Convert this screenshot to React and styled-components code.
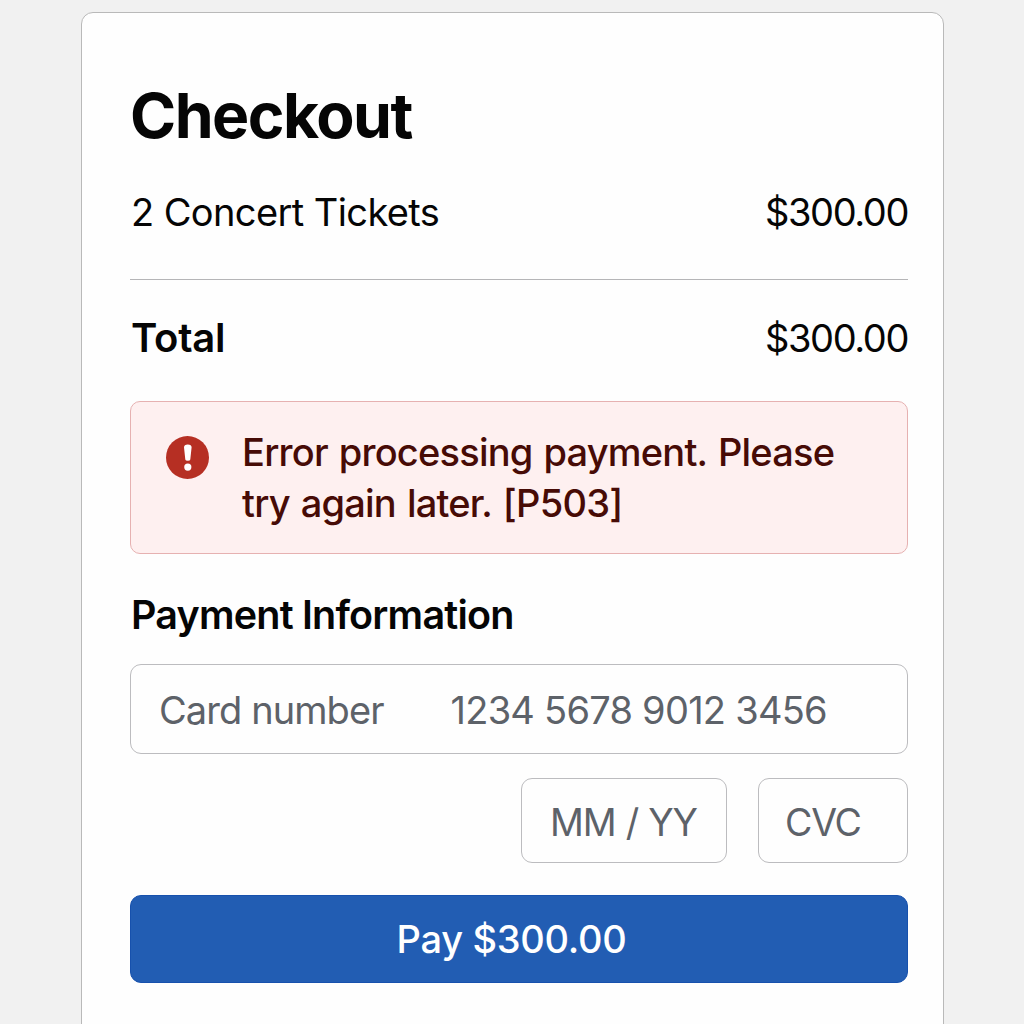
import React from "react";
import styled, { createGlobalStyle } from "styled-components";

const Global = createGlobalStyle`
  * { box-sizing: border-box; }
  html, body { margin: 0; height: 1024px; overflow: hidden; background: #f1f1f1; }
  body { font-family: Inter, "Liberation Sans", sans-serif; color: #050505; }
`;
const Page = styled.div`
  height: 1024px; overflow: hidden; padding: 12px 80px 0 81px; background: #f1f1f1;
`;
const Card = styled.main`
  height: 1030px; padding: 63px 35px 0 48px; border: 1px solid #b9b9b9; border-radius: 12px; background: #fefefe;
`;
const Text = styled.span`
  display: block; white-space: nowrap;
  font-size: ${p => p.$size || 38}px; font-weight: ${p => p.$weight || 400};
  letter-spacing: ${p => p.$track || 0}px; word-spacing: ${p => p.$words || 0}px; line-height: 46px;
`;
const Title = styled.h1`
  margin: 0; height: 77px; font-size: 62.5px; line-height: 78px; font-weight: 660; letter-spacing: -1.55px;
`;
const Row = styled.div`
  display: flex; justify-content: space-between; align-items: center; height: 46px;
  margin-top: ${p => p.$top}px; padding-left: 1px;
`;
const Divider = styled.hr`
  height: 1px; border: 0; margin: 44px 0 0; background: #b5b5b7;
`;
const Alert = styled.div`
  display: flex; height: 153px; margin-top: 40px; padding: 27px 34px 0 35px; gap: 33px;
  border: 1px solid #e6b1b1; border-radius: 10px; background: #fef0f0; color: #470b06;
`;
const AlertIcon = styled.svg`
  width: 43px; height: 43px; margin-top: 7px; flex: none;
`;
const Message = styled.div`
  display: flex; flex-direction: column; gap: 5px;
`;
const Heading = styled.h2`
  margin: 38px 0 26px; height: 46px; padding-left: 1px;
`;
const Field = styled.div`
  display: flex; align-items: center; width: ${p => p.$width}; height: ${p => p.$height}px;
  padding: ${p => p.$drop || 0}px 0 0 ${p => p.$pad}px; gap: 67px;
  border: 1px solid #bcbcbf; border-radius: 11px; color: #5d6269;
`;
const SmallFields = styled.div`
  display: flex; justify-content: flex-end; gap: 31px; margin-top: 24px;
`;
const Button = styled.button`
  display: flex; align-items: center; justify-content: center; width: 100%; height: 88px; margin-top: 32px;
  padding: 0 15px 0 0; border: 1px solid #1751ad; border-radius: 11px; background: #225db3; color: #fff; font-family: inherit;
`;

export default function App() {
  return (
    <Page>
      <Global />
      <Card>
        <Title>Checkout</Title>
        <Row $top={36}>
          <Text $track={-0.6}>2 Concert Tickets</Text>
          <Text $track={-1.4}>$300.00</Text>
        </Row>
        <Divider />
        <Row $top={35}>
          <Text $weight={600} $size={40} $track={-0.2}>Total</Text>
          <Text $track={-1.4}>$300.00</Text>
        </Row>
        <Alert role="alert">
          <AlertIcon viewBox="0 0 43 43" aria-hidden="true">
            <circle cx="21.5" cy="21.5" r="21.5" fill="#b62f23" />
            <path d="M18 11.3Q18 8.4 21.8 8.4Q25.6 8.4 25.6 11.3L24.3 23.6Q24.2 24.8 21.8 24.8Q19.4 24.8 19.3 23.6Z" fill="#fff" />
            <circle cx="21.8" cy="31.1" r="3.6" fill="#fff" />
          </AlertIcon>
          <Message>
            <Text $weight={500} $track={-0.78} $words={1.6}>Error processing payment. Please</Text>
            <Text $weight={500} $track={-0.78} $words={1.6}>try again later. [P503]</Text>
          </Message>
        </Alert>
        <Heading><Text $weight={600} $size={39.5} $track={-0.8}>Payment Information</Text></Heading>
        <Field $width="100%" $height={90} $pad={28} $drop={1}>
          <Text $track={-0.92}>Card number</Text>
          <Text $track={-0.76}>1234 5678 9012 3456</Text>
        </Field>
        <SmallFields>
          <Field $width="206px" $height={85} $pad={28} $drop={4}><Text $size={37.5} $track={-1.15} $words={0.8}>MM / YY</Text></Field>
          <Field $width="150px" $height={85} $pad={26} $drop={4}><Text $size={37.5} $track={-1.2}>CVC</Text></Field>
        </SmallFields>
        <Button><Text $weight={550} $track={-0.3}>Pay $300.00</Text></Button>
      </Card>
    </Page>
  );
}
